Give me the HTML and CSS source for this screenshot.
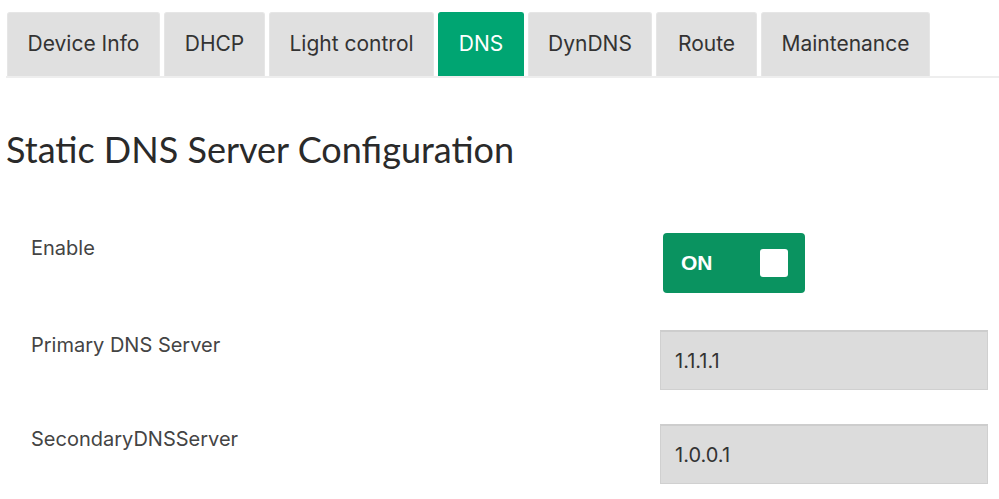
FILE: index.html
```html
<!DOCTYPE html>
<html>
<head>
<meta charset="utf-8">
<link rel="stylesheet" href="styles.css">
</head>
<body>
<div class="page">
  <nav class="tabs">
    <a class="tab">Device Info</a>
    <a class="tab">DHCP</a>
    <a class="tab">Light control</a>
    <a class="tab active">DNS</a>
    <a class="tab">DynDNS</a>
    <a class="tab">Route</a>
    <a class="tab">Maintenance</a>
  </nav>
  <h1 class="title">Static DNS Server Configuration</h1>
  <div class="form">
    <div class="row row-enable">
      <label class="label">Enable</label>
      <div class="control">
        <div class="toggle"><span class="toggle-text">ON</span><span class="knob"></span></div>
      </div>
    </div>
    <div class="row">
      <label class="label">Primary DNS Server</label>
      <div class="control"><div class="input">1.1.1.1</div></div>
    </div>
    <div class="row">
      <label class="label">SecondaryDNSServer</label>
      <div class="control"><div class="input">1.0.0.1</div></div>
    </div>
  </div>
</div>
</body>
</html>
```
FILE: styles.css
```css
* { box-sizing: border-box; }
html, body { margin: 0; padding: 0; background: #fff; }
body { font-family: Inter, Lato, "Noto Sans", sans-serif; color: #333; }
.page { padding: 12px 0 0 6px; }
.tabs {
  display: flex;
  gap: 4px;
  border-bottom: 2px solid #eeeeee;
  padding-left: 1px;
}
.tab {
  height: 64px;
  display: flex;
  align-items: center;
  padding: 0 0 2px 0;
  justify-content: center;
  background: #e0e0e0;
  border: 1px solid #e6e6e6;
  border-bottom: none;
  border-radius: 3px 3px 0 0;
  font-size: 21px;
  color: #333;
}
.tab:nth-child(1) { width: 153px; }
.tab:nth-child(2) { width: 101px; }
.tab:nth-child(3) { width: 165px; }
.tab:nth-child(4) { width: 86px; }
.tab:nth-child(5) { width: 124px; }
.tab:nth-child(6) { width: 101px; }
.tab:nth-child(7) { width: 169px; }
.tab.active { background: #00a572; border-color: #00a572; color: #fff; }
.title {
  margin: 49px 0 0 0;
  font-family: Lato, sans-serif;
  font-size: 36px;
  font-weight: 400;
  color: #2a2a2a;
  line-height: 44px;
}
.form { margin-top: 62px; }
.row { display: flex; align-items: flex-start; margin-bottom: 34px; }
.row-enable { margin-bottom: 37px; }
.label {
  width: 654px;
  padding-left: 25px;
  padding-top: 3px;
  font-size: 20px;
  color: #444;
  line-height: 24px;
}
.toggle {
  width: 142px;
  height: 60px;
  margin-left: 3px;
  background: #0a9360;
  border-radius: 4px;
  display: flex;
  align-items: center;
  justify-content: space-between;
  padding: 0 17px 0 18px;
}
.toggle-text { color: #fff; font-weight: 700; font-size: 21px; font-family: "Liberation Sans", Arial, sans-serif; }
.knob { width: 28px; height: 28px; background: #fff; border-radius: 3px; }
.input {
  width: 328px;
  height: 60px;
  background: #dcdcdc;
  border: 1px solid #d0d0d0;
  border-top: 2px solid #cdcdcd;
  display: flex;
  align-items: center;
  padding-left: 14px;
  font-size: 20px;
  color: #333;
}
```
